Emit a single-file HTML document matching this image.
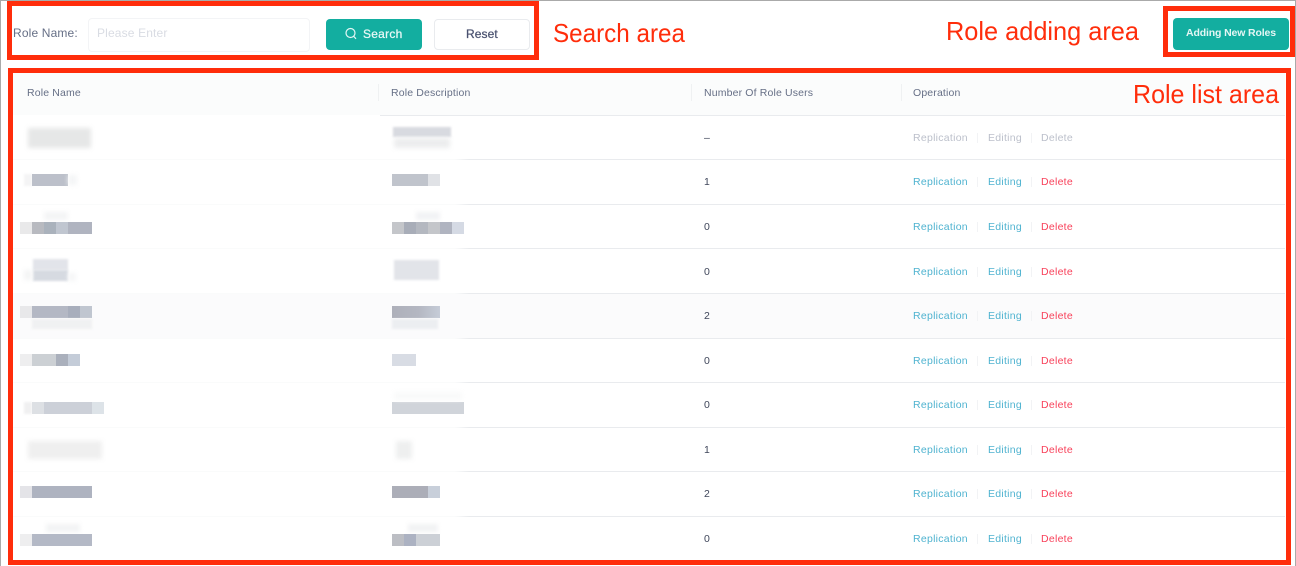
<!DOCTYPE html>
<html lang="en">
<head>
<meta charset="utf-8">
<title>Role list</title>
<style>
html,body{margin:0;padding:0;background:#fff}
body{position:relative;width:1296px;height:566px;overflow:hidden;font-family:"Liberation Sans",sans-serif}
.a{position:absolute;white-space:nowrap}
.red{position:absolute;border:5px solid #ff2d0b;box-sizing:border-box}
.t{line-height:14px;font-size:10.5px;letter-spacing:.27px}
.h{color:#666f86;top:86px;letter-spacing:.15px}
.n{color:#3f465a;left:704px}
.r{left:913px;color:#4fb3d0}
.e{left:988px;color:#4fb3d0}
.d{left:1041px;color:#f8415a}
.off{color:#bcc0cb}
.sep{position:absolute;width:1px;height:10px;background:#f2f3f5}
.line{position:absolute;left:13px;width:1272px;height:1px;background:linear-gradient(90deg,#fafbfb 0,#fafbfb 442px,#e9ebee 456px,#e9ebee 100%)}
.b{position:absolute;height:12px}
.f{filter:blur(2.5px)}
.s{filter:blur(1px)}
</style>
</head>
<body>
<div class="a" style="left:0;top:0;width:1296px;height:1px;background:#aaa"></div>
<div class="a" style="left:0;top:0;width:1px;height:566px;background:#aaa"></div>
<div class="a" style="left:1295px;top:0;width:1px;height:566px;background:#aaa"></div>

<div class="a" style="left:13px;top:73px;width:1272px;height:42px;background:#fbfcfc"></div>
<div class="a" style="left:13px;top:294px;width:1272px;height:44px;background:#fbfbfc"></div>

<div class="a" style="left:13px;top:26px;font-size:12px;line-height:14px;color:#666f86;letter-spacing:.15px">Role Name:</div>
<div class="a" style="left:88px;top:18px;width:222px;height:34px;box-sizing:border-box;border:1px solid #f3f4f6;border-radius:4px"></div>
<div class="a" style="left:97px;top:26px;font-size:12px;line-height:14px;color:#d9dce3;letter-spacing:.15px">Please Enter</div>
<div class="a" style="left:326px;top:19px;width:96px;height:31px;background:#13aea0;border-radius:4px"></div>
<svg class="a" style="left:344px;top:27px" width="14" height="14" viewBox="0 0 14 14" fill="none" stroke="#e4f7f5" stroke-width="1.2"><circle cx="6.5" cy="6" r="4.5"/><path d="M9.8 9.4 12 11.8"/></svg>
<div class="a" style="left:363px;top:27px;font-size:12px;line-height:14px;color:#e8f8f6;letter-spacing:.25px;-webkit-text-stroke:.25px #e8f8f6">Search</div>
<div class="a" style="left:434px;top:19px;width:96px;height:31px;box-sizing:border-box;background:#fff;border:1px solid #e9ebee;border-radius:4px"></div>
<div class="a" style="left:466px;top:27px;font-size:12px;line-height:14px;color:#4a5270;letter-spacing:.1px;-webkit-text-stroke:.25px #4a5270">Reset</div>
<div class="a" style="left:1173px;top:18px;width:116px;height:32px;background:#13aea0;border-radius:4px"></div>
<div class="a" style="left:1186px;top:26px;font-size:10.5px;line-height:14px;font-weight:bold;color:#e4f6f4;letter-spacing:-.14px">Adding New Roles</div>

<div class="a t h" style="left:27px">Role Name</div>
<div class="a t h" style="left:391px">Role Description</div>
<div class="a t h" style="left:704px">Number Of Role Users</div>
<div class="a t h" style="left:913px">Operation</div>
<div class="a" style="left:378px;top:84px;width:1px;height:17px;background:#eff1f2"></div>
<div class="a" style="left:691px;top:84px;width:1px;height:17px;background:#eff1f2"></div>
<div class="a" style="left:901px;top:84px;width:1px;height:17px;background:#eff1f2"></div>

<div class="a" style="left:380px;top:115px;width:905px;height:1px;background:#e9ebee"></div>
<div class="line" style="top:159px"></div>
<div class="line" style="top:204px"></div>
<div class="line" style="top:248px"></div>
<div class="line" style="top:293px"></div>
<div class="line" style="top:338px"></div>
<div class="line" style="top:382px"></div>
<div class="line" style="top:427px"></div>
<div class="line" style="top:471px"></div>
<div class="line" style="top:516px"></div>

<div class="a t n" style="top:131px">–</div>
<div class="a t r off" style="top:131px">Replication</div><div class="sep" style="left:977px;top:133px"></div><div class="a t e off" style="top:131px">Editing</div><div class="sep" style="left:1031px;top:133px"></div><div class="a t d off" style="top:131px">Delete</div>

<div class="a t n" style="top:175px">1</div>
<div class="a t r" style="top:175px">Replication</div><div class="sep" style="left:977px;top:177px"></div><div class="a t e" style="top:175px">Editing</div><div class="sep" style="left:1031px;top:177px"></div><div class="a t d" style="top:175px">Delete</div>

<div class="a t n" style="top:220px">0</div>
<div class="a t r" style="top:220px">Replication</div><div class="sep" style="left:977px;top:222px"></div><div class="a t e" style="top:220px">Editing</div><div class="sep" style="left:1031px;top:222px"></div><div class="a t d" style="top:220px">Delete</div>

<div class="a t n" style="top:265px">0</div>
<div class="a t r" style="top:265px">Replication</div><div class="sep" style="left:977px;top:267px"></div><div class="a t e" style="top:265px">Editing</div><div class="sep" style="left:1031px;top:267px"></div><div class="a t d" style="top:265px">Delete</div>

<div class="a t n" style="top:309px">2</div>
<div class="a t r" style="top:309px">Replication</div><div class="sep" style="left:977px;top:311px"></div><div class="a t e" style="top:309px">Editing</div><div class="sep" style="left:1031px;top:311px"></div><div class="a t d" style="top:309px">Delete</div>

<div class="a t n" style="top:354px">0</div>
<div class="a t r" style="top:354px">Replication</div><div class="sep" style="left:977px;top:356px"></div><div class="a t e" style="top:354px">Editing</div><div class="sep" style="left:1031px;top:356px"></div><div class="a t d" style="top:354px">Delete</div>

<div class="a t n" style="top:398px">0</div>
<div class="a t r" style="top:398px">Replication</div><div class="sep" style="left:977px;top:400px"></div><div class="a t e" style="top:398px">Editing</div><div class="sep" style="left:1031px;top:400px"></div><div class="a t d" style="top:398px">Delete</div>

<div class="a t n" style="top:443px">1</div>
<div class="a t r" style="top:443px">Replication</div><div class="sep" style="left:977px;top:445px"></div><div class="a t e" style="top:443px">Editing</div><div class="sep" style="left:1031px;top:445px"></div><div class="a t d" style="top:443px">Delete</div>

<div class="a t n" style="top:487px">2</div>
<div class="a t r" style="top:487px">Replication</div><div class="sep" style="left:977px;top:489px"></div><div class="a t e" style="top:487px">Editing</div><div class="sep" style="left:1031px;top:489px"></div><div class="a t d" style="top:487px">Delete</div>

<div class="a t n" style="top:532px">0</div>
<div class="a t r" style="top:532px">Replication</div><div class="sep" style="left:977px;top:534px"></div><div class="a t e" style="top:532px">Editing</div><div class="sep" style="left:1031px;top:534px"></div><div class="a t d" style="top:532px">Delete</div>

<!-- row 1 -->
<div class="b f" style="left:28px;top:128px;width:63px;height:20px;background:#e6e7e7"></div>
<div class="b s" style="left:393px;top:127px;width:58px;height:10px;background:#d8dae0"></div>
<div class="b f" style="left:394px;top:138px;width:56px;height:10px;background:#ecedee"></div>
<!-- row 2 -->
<div class="b s" style="left:24px;top:174px;width:8px;background:#f4f4f5"></div>
<div class="b" style="left:32px;top:174px;width:36px;background:#bcc0ca"></div>
<div class="b f" style="left:68px;top:175px;width:9px;height:10px;background:#f4f5f6"></div>
<div class="b" style="left:392px;top:174px;width:36px;background:#c0c4cc"></div>
<div class="b" style="left:428px;top:174px;width:12px;background:#e0e2e6"></div>
<!-- row 3 -->
<div class="b f" style="left:44px;top:212px;width:24px;height:8px;background:#f3f4f5"></div>
<div class="b f" style="left:416px;top:212px;width:24px;height:8px;background:#f1f2f4"></div>
<div class="b" style="left:20px;top:222px;width:12px;background:#e9e9ea"></div>
<div class="b" style="left:32px;top:222px;width:12px;background:#b8bac0"></div>
<div class="b" style="left:44px;top:222px;width:12px;background:#aab2bc"></div>
<div class="b" style="left:56px;top:222px;width:12px;background:#c0c6d0"></div>
<div class="b" style="left:68px;top:222px;width:24px;background:#b0b4c0"></div>
<div class="b" style="left:392px;top:222px;width:12px;background:#c4c6ca"></div>
<div class="b" style="left:404px;top:222px;width:12px;background:#a8adb8"></div>
<div class="b" style="left:416px;top:222px;width:12px;background:#b4b8c0"></div>
<div class="b" style="left:428px;top:222px;width:12px;background:#c4c6ca"></div>
<div class="b" style="left:440px;top:222px;width:12px;background:#b0b4c0"></div>
<div class="b" style="left:452px;top:222px;width:12px;background:#d5dae4"></div>
<!-- row 4 -->
<div class="b s" style="left:33px;top:259px;width:35px;height:11px;background:#e2e4ea"></div>
<div class="b s" style="left:33px;top:270px;width:35px;height:11px;background:#d6dae1"></div>
<div class="b f" style="left:24px;top:270px;width:8px;height:10px;background:#f3f4f5"></div>
<div class="b f" style="left:68px;top:273px;width:8px;height:8px;background:#f5f6f7"></div>
<div class="b s" style="left:394px;top:260px;width:45px;height:20px;background:#e2e4e9"></div>
<!-- row 5 -->
<div class="b" style="left:20px;top:306px;width:12px;background:#e8e8ea"></div>
<div class="b" style="left:32px;top:306px;width:36px;background:#b4b8c4"></div>
<div class="b" style="left:68px;top:306px;width:12px;background:#a8aebc"></div>
<div class="b" style="left:80px;top:306px;width:12px;background:#c0c6d0"></div>
<div class="b s" style="left:32px;top:319px;width:60px;height:10px;background:#f0f1f2"></div>
<div class="b" style="left:392px;top:306px;width:48px;background:linear-gradient(90deg,#aeb0ba 0,#b4b7c2 55%,#c6ccd8 100%)"></div>
<div class="b s" style="left:392px;top:319px;width:46px;height:10px;background:#eceef1"></div>
<!-- row 6 -->
<div class="b" style="left:20px;top:354px;width:12px;background:#eeeeef"></div>
<div class="b" style="left:32px;top:354px;width:24px;background:#ccd0d4"></div>
<div class="b" style="left:56px;top:354px;width:12px;background:#aab0bc"></div>
<div class="b" style="left:68px;top:354px;width:12px;background:#c4ccd8"></div>
<div class="b" style="left:392px;top:354px;width:24px;background:#d8dce4"></div>
<!-- row 7 -->
<div class="b s" style="left:24px;top:402px;width:8px;background:#f0f0f1"></div>
<div class="b" style="left:32px;top:402px;width:12px;background:#dde0e4"></div>
<div class="b" style="left:44px;top:402px;width:48px;background:#ccd0d8"></div>
<div class="b" style="left:92px;top:402px;width:12px;background:#dde3e8"></div>
<div class="b" style="left:392px;top:402px;width:72px;background:#d0d4da"></div>
<div class="b f" style="left:394px;top:392px;width:68px;height:8px;background:#f9fafa"></div>
<!-- row 8 -->
<div class="b f" style="left:28px;top:441px;width:74px;height:18px;background:#efefef"></div>
<div class="b f" style="left:396px;top:441px;width:16px;height:18px;background:#eeefef"></div>
<!-- row 9 -->
<div class="b" style="left:20px;top:486px;width:12px;background:#e4e4e8"></div>
<div class="b" style="left:32px;top:486px;width:60px;background:#aeb3c0"></div>
<div class="b" style="left:392px;top:486px;width:36px;background:#acaeb8"></div>
<div class="b" style="left:428px;top:486px;width:12px;background:#c8cfda"></div>
<!-- row 10 -->
<div class="b f" style="left:46px;top:524px;width:34px;height:8px;background:#f2f3f4"></div>
<div class="b f" style="left:408px;top:524px;width:30px;height:8px;background:#f1f2f3"></div>
<div class="b" style="left:20px;top:534px;width:12px;background:#eeeeef"></div>
<div class="b" style="left:32px;top:534px;width:60px;background:#b4b9c6"></div>
<div class="b" style="left:392px;top:534px;width:12px;background:#bcbec4"></div>
<div class="b" style="left:404px;top:534px;width:12px;background:#acb2c2"></div>
<div class="b" style="left:416px;top:534px;width:24px;background:#ccd0d6"></div>

<!-- annotation boxes -->
<div class="red" style="left:7px;top:1px;width:532px;height:59px"></div>
<div class="red" style="left:1163px;top:6px;width:132px;height:51px"></div>
<div class="red" style="left:8px;top:68px;width:1283px;height:497px"></div>

<svg class="a" style="left:0;top:0" width="1296" height="566" font-family="Liberation Sans, sans-serif" font-size="26" fill="#ff2d0b">
<text x="553" y="42" textLength="132" lengthAdjust="spacingAndGlyphs">Search area</text>
<text x="946" y="40" textLength="193" lengthAdjust="spacingAndGlyphs">Role adding area</text>
<text x="1133" y="103" textLength="146" lengthAdjust="spacingAndGlyphs">Role list area</text>
</svg>
</body>
</html>
